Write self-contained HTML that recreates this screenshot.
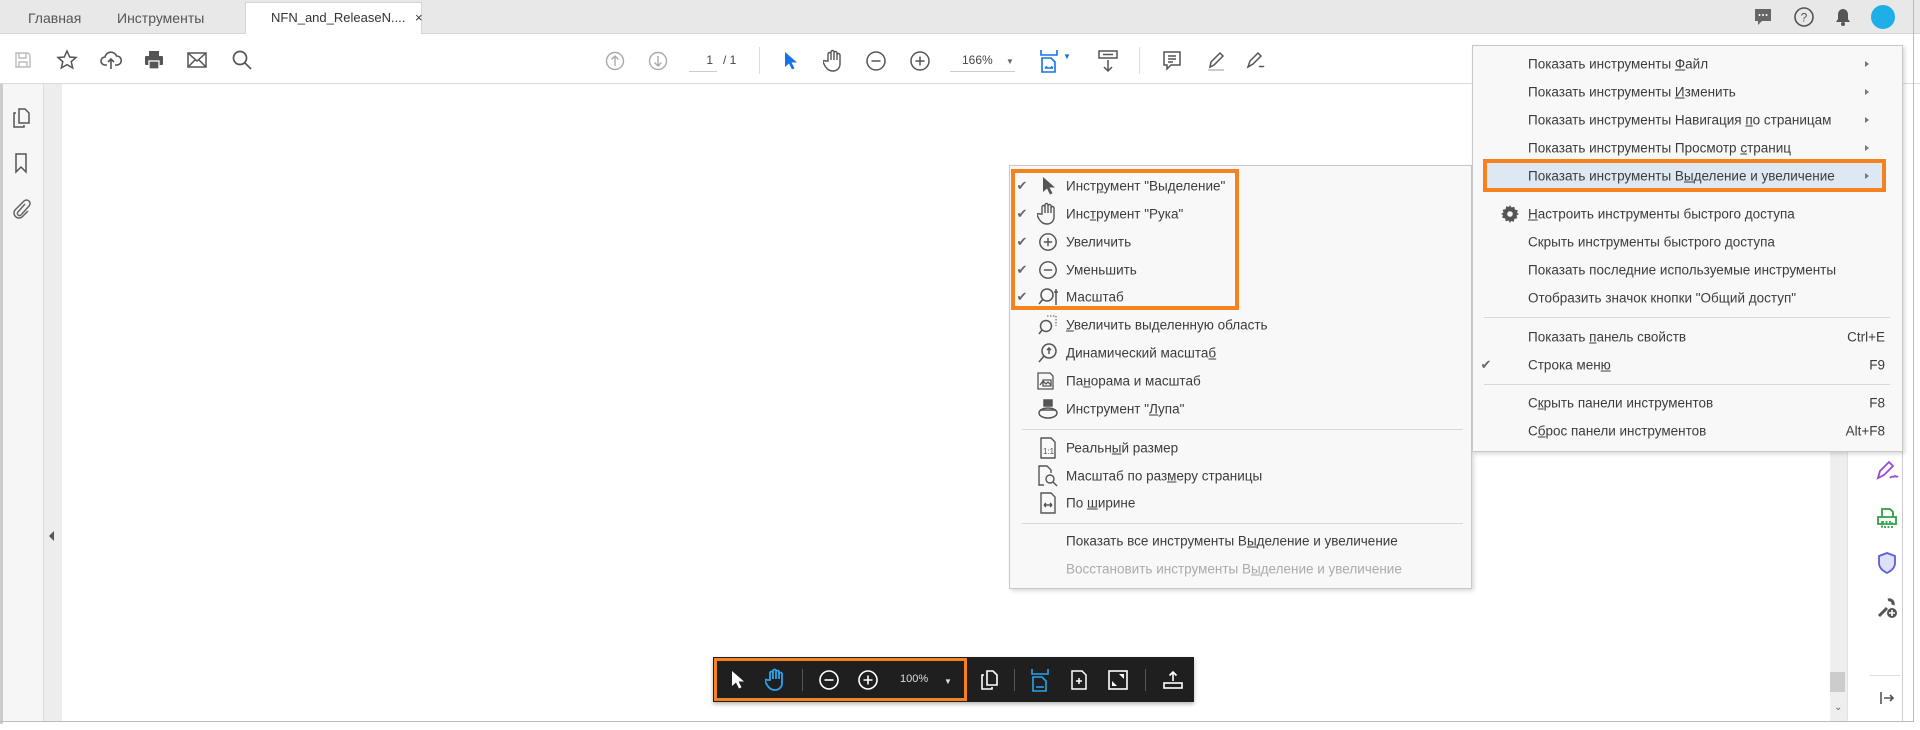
<!DOCTYPE html>
<html><head><meta charset="utf-8"><style>
*{box-sizing:border-box;margin:0;padding:0}
body{width:1920px;height:730px;background:#fff;font-family:"Liberation Sans","DejaVu Sans",sans-serif;color:#444;position:relative;overflow:hidden;font-size:13px}
.a{position:absolute}
.tabbar{left:0;top:0;width:1920px;height:34px;background:#e8e8e8;border-bottom:1px solid #d6d6d6}
.tab{top:10px;font-size:14px;color:#555}
.tb{left:0;top:34px;width:1920px;height:50px;background:#fff;border-bottom:1px solid #dcdcdc}
.ic{position:absolute;transform:translate(-50%,-50%)}
.menu{background:#f8f8f8;border:1px solid #c8c8c8;box-shadow:2px 2px 4px rgba(0,0,0,.15)}
.mi{position:absolute;font-size:13.5px;color:#3c3c3c;white-space:nowrap;transform:translateY(-50%)}
.sep{position:absolute;height:1px;background:#d8d8d8}
.chk{position:absolute;font-size:13px;color:#666;transform:translate(-50%,-50%)}
.arr{position:absolute;width:0;height:0;border-left:4px solid #777;border-top:3.5px solid transparent;border-bottom:3.5px solid transparent;transform:translateY(-50%)}
u{text-decoration:underline}
</style></head><body>
<div class="a tabbar"></div>
<div class="a tab" style="left:28px">Главная</div>
<div class="a tab" style="left:117px">Инструменты</div>
<div class="a" style="left:245px;top:2px;width:177px;height:33px;background:#fff;border:1px solid #d6d6d6;border-bottom:none"></div>
<div class="a tab" style="left:271px;font-size:13px;color:#333">NFN_and_ReleaseN.... <span style="margin-left:6px">×</span></div>
<!-- top right -->
<svg class="ic" style="left:1763px;top:17px" width="20" height="20" viewBox="0 0 20 20"><path d="M2 2h16v12H9l-4 4v-4H2z" fill="#666"/><circle cx="6.5" cy="8" r="1" fill="#fff"/><circle cx="10" cy="8" r="1" fill="#fff"/><circle cx="13.5" cy="8" r="1" fill="#fff"/></svg>
<svg class="ic" style="left:1804px;top:17px" width="22" height="22" viewBox="0 0 22 22"><circle cx="11" cy="11" r="9" fill="none" stroke="#555" stroke-width="1.6"/><text x="11" y="15.5" font-size="12" text-anchor="middle" fill="#555" font-family="Liberation Sans">?</text></svg>
<svg class="ic" style="left:1843px;top:17px" width="18" height="20" viewBox="0 0 18 20"><path d="M9 2c-3 0-5 2.5-5 5.5V12L2 15h14l-2-3V7.5C14 4.5 12 2 9 2z" fill="#555"/><circle cx="9" cy="17" r="2" fill="#555"/></svg>
<div class="a" style="left:1871px;top:5px;width:24px;height:24px;border-radius:50%;background:#1eaee8"></div>
<!-- toolbar -->
<div class="a tb"></div>
<svg class="ic" style="left:23px;top:60px" width="20" height="20" viewBox="0 0 20 20" fill="none" stroke="#bbb" stroke-width="1.4"><path d="M3 3h12l2 2v12H3z"/><path d="M6 3v5h7V3M6 17v-5h8v5"/></svg>
<svg class="ic" style="left:67px;top:60px" width="22" height="22" viewBox="0 0 22 22" fill="none" stroke="#555" stroke-width="1.5"><path d="M11 2l2.7 6 6.3.5-4.8 4.2 1.5 6.3L11 15.6 5.3 19l1.5-6.3L2 8.5 8.3 8z"/></svg>
<svg class="ic" style="left:111px;top:60px" width="22" height="22" viewBox="0 0 22 22" fill="none" stroke="#555" stroke-width="1.6"><path d="M7 16H5a4 4 0 010-8 6 6 0 0111.5-1A4.5 4.5 0 0117 16h-2M11 20v-9M8 13l3-3 3 3"/></svg>
<svg class="ic" style="left:154px;top:60px" width="22" height="22" viewBox="0 0 22 22"><rect x="6" y="2" width="10" height="5" fill="#555"/><rect x="2" y="7" width="18" height="9" rx="1" fill="#555"/><rect x="6" y="12" width="10" height="8" fill="#555" stroke="#fff" stroke-width="1.3"/></svg>
<svg class="ic" style="left:197px;top:60px" width="22" height="20" viewBox="0 0 22 20" fill="none" stroke="#555" stroke-width="1.5"><rect x="2" y="3" width="18" height="14"/><path d="M2 3l9 8 9-8M2 17l7-7M20 17l-7-7"/></svg>
<svg class="ic" style="left:242px;top:60px" width="22" height="22" viewBox="0 0 22 22" fill="none" stroke="#555" stroke-width="1.7"><circle cx="9" cy="9" r="6.5"/><path d="M14 14l6 6"/></svg>
<svg class="ic" style="left:615px;top:61px" width="20" height="20" viewBox="0 0 20 20" fill="none" stroke="#aaa" stroke-width="1.4"><circle cx="10" cy="10" r="8.5"/><path d="M10 15V5M6.5 8.5L10 5l3.5 3.5"/></svg>
<svg class="ic" style="left:658px;top:61px" width="20" height="20" viewBox="0 0 20 20" fill="none" stroke="#aaa" stroke-width="1.4"><circle cx="10" cy="10" r="8.5"/><path d="M10 5v10M6.5 11.5L10 15l3.5-3.5"/></svg>
<div class="a" style="left:689px;top:53px;width:28px;font-size:12px;text-align:right;color:#444;border-bottom:1px solid #ccc;padding-bottom:4px;padding-right:4px">1</div>
<div class="a" style="left:723px;top:53px;font-size:12px;color:#444">/ 1</div>
<div class="a" style="left:759px;top:47px;width:1px;height:27px;background:#ddd"></div>
<svg class="ic" style="left:790px;top:61px" width="14" height="20" viewBox="0 0 14 20"><path d="M2 1v15l4-3.5 3 6 2.5-1.2-3-5.8H14z" fill="#1473e6"/></svg>
<svg class="ic" style="left:834px;top:61px" width="22" height="24" viewBox="0 0 22 24" fill="none" stroke="#555" stroke-width="1.4"><path d="M5 12V5a1.5 1.5 0 013 0v6V3a1.5 1.5 0 013 0v8V4a1.5 1.5 0 013 0v7V6a1.5 1.5 0 013 0v9c0 4-3 7-7 7s-6-2-8-5l-2-4c-.5-1 1-2 2-1z"/></svg>
<svg class="ic" style="left:876px;top:61px" width="22" height="22" viewBox="0 0 22 22" fill="none" stroke="#555" stroke-width="1.5"><circle cx="11" cy="11" r="9"/><path d="M6.5 11h9"/></svg>
<svg class="ic" style="left:920px;top:61px" width="22" height="22" viewBox="0 0 22 22" fill="none" stroke="#555" stroke-width="1.5"><circle cx="11" cy="11" r="9"/><path d="M6.5 11h9M11 6.5v9"/></svg>
<div class="a" style="left:950px;top:53px;width:65px;font-size:12px;color:#444;border-bottom:1px solid #ccc;padding:0 0 4px 12px">166% <span style="font-size:8px;margin-left:10px;color:#666">▼</span></div>
<svg class="ic" style="left:1049px;top:61px" width="20" height="24" viewBox="0 0 20 24" fill="none" stroke="#1473e6" stroke-width="1.6"><path d="M2 1v5h16V1M3 9h9l4 4v10H3zM6 19h8M6 19l2-1.5M14 19l-2-1.5"/></svg>
<div class="a" style="left:1063px;top:52px;font-size:8px;color:#1473e6">▼</div>
<svg class="ic" style="left:1108px;top:61px" width="22" height="24" viewBox="0 0 22 24" fill="none" stroke="#555" stroke-width="1.5"><rect x="2" y="2" width="18" height="7"/><path d="M6 5.5h10M11 11v11M7 18l4 4 4-4"/></svg>
<div class="a" style="left:1139px;top:47px;width:1px;height:27px;background:#ddd"></div>
<svg class="ic" style="left:1172px;top:61px" width="20" height="22" viewBox="0 0 20 22" fill="none" stroke="#555" stroke-width="1.5"><path d="M2 2h16v13H9l-4 4v-4H2z"/><path d="M6 6h8M6 9h8M6 12h5"/></svg>
<svg class="ic" style="left:1216px;top:61px" width="22" height="22" viewBox="0 0 22 22" fill="none" stroke="#555" stroke-width="1.5"><path d="M5 17l1-5 9-9 3 3-9 9z"/><path d="M3 20h16" stroke="#ccc" stroke-width="2"/></svg>
<svg class="ic" style="left:1257px;top:61px" width="24" height="22" viewBox="0 0 24 22" fill="none" stroke="#555" stroke-width="1.5"><path d="M3 17l2-6 8-8 3 3-8 8zM14 17c2-2 3 1 5-1"/></svg>
<!-- left sidebar -->
<div class="a" style="left:0;top:84px;width:3px;height:640px;background:#ccc"></div>
<div class="a" style="left:3px;top:84px;width:41px;height:637px;background:#f6f6f6;border-right:1px solid #ddd"></div>
<div class="a" style="left:44px;top:84px;width:18px;height:637px;background:#ededed"></div>
<svg class="ic" style="left:21px;top:118px" width="20" height="22" viewBox="0 0 20 22" fill="none" stroke="#555" stroke-width="1.5"><path d="M8 2h6l4 4v10H8zM5 6H3v14h10v-2"/></svg>
<svg class="ic" style="left:21px;top:163px" width="16" height="22" viewBox="0 0 16 22" fill="none" stroke="#555" stroke-width="1.5"><path d="M3 2h10v18l-5-5-5 5z"/></svg>
<svg class="ic" style="left:21px;top:208px" width="20" height="22" viewBox="0 0 20 22" fill="none" stroke="#666" stroke-width="1.5"><path d="M14 7l-7 8a2 2 0 003 3l8-9a3.5 3.5 0 00-5-5L4 13a5 5 0 007 7l6-6"/></svg>
<div class="a" style="left:49px;top:531px;width:0;height:0;border-right:5px solid #555;border-top:5px solid transparent;border-bottom:5px solid transparent"></div>
<!-- right side -->
<div class="a" style="left:1830px;top:84px;width:17px;height:637px;background:#eee"></div>
<div class="a" style="left:1830px;top:672px;width:15px;height:20px;background:#ccc"></div>
<div class="a" style="left:1834px;top:702px;font-size:10px;color:#666">⌄</div>
<div class="a" style="left:1847px;top:84px;width:56px;height:637px;background:#fff;border-left:1px solid #e2e2e2;border-right:1px solid #ccc"></div>
<svg class="ic" style="left:1887px;top:470px" width="26" height="24" viewBox="0 0 26 24" fill="none" stroke="#9a48d8" stroke-width="1.8"><path d="M4 20l2-7 9-9 4 4-9 9zM16 20c2-3 3 0 5-2 1 1 2 1 3 0"/></svg>
<svg class="ic" style="left:1887px;top:518px" width="24" height="24" viewBox="0 0 24 24" fill="none" stroke="#2ea043" stroke-width="1.8"><path d="M7 3h8l3 3v5H7zM3 11h18v7H3z"/><path d="M7 16h10v5H7z" stroke-dasharray="2 1.5"/></svg>
<svg class="ic" style="left:1887px;top:563px" width="22" height="24" viewBox="0 0 22 24"><path d="M11 2l8 3v7c0 5-4 8-8 10-4-2-8-5-8-10V5z" fill="#dfe0fb" stroke="#5b5fd6" stroke-width="1.8"/></svg>
<svg class="ic" style="left:1887px;top:608px" width="24" height="24" viewBox="0 0 24 24"><path d="M4 20l8-8M13 4a4 4 0 015 5" stroke="#555" stroke-width="3" fill="none"/><circle cx="17" cy="17" r="5" fill="#555"/><path d="M17 14v6M14 17h6" stroke="#fff" stroke-width="1.6"/></svg>
<div class="a" style="left:1870px;top:675px;width:30px;height:1px;background:#ddd"></div>
<svg class="ic" style="left:1887px;top:698px" width="18" height="16" viewBox="0 0 18 16" fill="none" stroke="#555" stroke-width="1.6"><path d="M3 2v12M6 8h9M12 5l3 3-3 3"/></svg>
<div class="a" style="left:1913px;top:0;width:1px;height:722px;background:#bbb"></div>
<div class="a" style="left:0;top:721px;width:1914px;height:1px;background:#bbb"></div>
<!-- bottom floating toolbar -->
<div class="a" style="left:713px;top:657px;width:481px;height:45px;background:#1f1f1f;box-shadow:0 2px 4px rgba(0,0,0,.3)"></div>
<div class="a" style="left:714px;top:658px;width:253px;height:43px;border:3px solid #f5821f"></div>
<svg class="ic" style="left:737px;top:680px" width="14" height="20" viewBox="0 0 14 20"><path d="M2 1v15l4-3.5 3 6 2.5-1.2-3-5.8H14z" fill="#fff"/></svg>
<svg class="ic" style="left:776px;top:680px" width="22" height="24" viewBox="0 0 22 24" fill="none" stroke="#2aa3ee" stroke-width="1.8"><path d="M5 12V5a1.5 1.5 0 013 0v6V3a1.5 1.5 0 013 0v8V4a1.5 1.5 0 013 0v7V6a1.5 1.5 0 013 0v9c0 4-3 7-7 7s-6-2-8-5l-2-4c-.5-1 1-2 2-1z"/></svg>
<div class="a" style="left:802px;top:669px;width:1px;height:22px;background:#555"></div>
<svg class="ic" style="left:829px;top:680px" width="22" height="22" viewBox="0 0 22 22" fill="none" stroke="#fff" stroke-width="1.6"><circle cx="11" cy="11" r="9"/><path d="M6.5 11h9"/></svg>
<svg class="ic" style="left:868px;top:680px" width="22" height="22" viewBox="0 0 22 22" fill="none" stroke="#fff" stroke-width="1.6"><circle cx="11" cy="11" r="9"/><path d="M6.5 11h9M11 6.5v9"/></svg>
<div class="a" style="left:900px;top:673px;font-size:11px;color:#ddd">100%</div>
<div class="a" style="left:944px;top:677px;font-size:8px;color:#ddd">▼</div>
<svg class="ic" style="left:989px;top:680px" width="20" height="22" viewBox="0 0 20 22" fill="none" stroke="#fff" stroke-width="1.6"><path d="M8 2h6l4 4v10H8zM5 6H3v14h10v-2"/></svg>
<div class="a" style="left:1014px;top:669px;width:1px;height:22px;background:#555"></div>
<svg class="ic" style="left:1040px;top:680px" width="20" height="24" viewBox="0 0 20 24" fill="none" stroke="#2aa3ee" stroke-width="1.6"><path d="M2 1v5h16V1M3 9h9l4 4v10H3zM6 19h8"/></svg>
<svg class="ic" style="left:1079px;top:680px" width="20" height="22" viewBox="0 0 20 22" fill="none" stroke="#fff" stroke-width="1.5"><path d="M3 2h10l4 4v14H3z"/><path d="M10 9v6M7 12h6"/></svg>
<svg class="ic" style="left:1118px;top:680px" width="22" height="22" viewBox="0 0 22 22"><rect x="2" y="2" width="18" height="18" fill="none" stroke="#fff" stroke-width="1.6"/><path d="M12 5h5v5zM10 17H5v-5z" fill="#fff"/></svg>
<div class="a" style="left:1145px;top:669px;width:1px;height:22px;background:#555"></div>
<svg class="ic" style="left:1173px;top:680px" width="22" height="22" viewBox="0 0 22 22" fill="none" stroke="#fff" stroke-width="1.6"><path d="M11 12V3M7.5 6.5L11 3l3.5 3.5"/><rect x="2" y="14" width="18" height="5"/></svg>
<!-- left context menu -->
<div class="a menu" style="left:1009px;top:165px;width:463px;height:424px"></div>
<div class="a" style="left:1011px;top:169px;width:228px;height:141px;border:4px solid #f5821f"></div>
<span class="chk" style="left:1022px;top:186px">✔</span>
<span class="chk" style="left:1022px;top:214px">✔</span>
<span class="chk" style="left:1022px;top:242px">✔</span>
<span class="chk" style="left:1022px;top:270px">✔</span>
<span class="chk" style="left:1022px;top:297px">✔</span>
<svg class="ic" style="left:1048px;top:186px" width="14" height="20" viewBox="0 0 14 20"><path d="M2 1v15l4-3.5 3 6 2.5-1.2-3-5.8H14z" fill="#555"/></svg>
<svg class="ic" style="left:1048px;top:214px" width="22" height="24" viewBox="0 0 22 24" fill="none" stroke="#555" stroke-width="1.4"><path d="M5 12V5a1.5 1.5 0 013 0v6V3a1.5 1.5 0 013 0v8V4a1.5 1.5 0 013 0v7V6a1.5 1.5 0 013 0v9c0 4-3 7-7 7s-6-2-8-5l-2-4c-.5-1 1-2 2-1z"/></svg>
<svg class="ic" style="left:1048px;top:242px" width="20" height="20" viewBox="0 0 22 22" fill="none" stroke="#555" stroke-width="1.6"><circle cx="11" cy="11" r="9"/><path d="M6.5 11h9M11 6.5v9"/></svg>
<svg class="ic" style="left:1048px;top:270px" width="20" height="20" viewBox="0 0 22 22" fill="none" stroke="#555" stroke-width="1.6"><circle cx="11" cy="11" r="9"/><path d="M6.5 11h9"/></svg>
<svg class="ic" style="left:1048px;top:297px" width="22" height="20" viewBox="0 0 22 20" fill="none" stroke="#555" stroke-width="1.5"><circle cx="10" cy="8" r="6"/><path d="M6 12l-4 5M19 2v16M17 5h4"/></svg>
<svg class="ic" style="left:1048px;top:325px" width="22" height="22" viewBox="0 0 22 22" fill="none" stroke="#555" stroke-width="1.5"><circle cx="9" cy="12" r="5.5"/><path d="M5 16l-3 4"/><path d="M10 2h9v10" stroke-dasharray="1.5 1.5" stroke-width="1"/></svg>
<svg class="ic" style="left:1048px;top:353px" width="22" height="22" viewBox="0 0 22 22" fill="none" stroke="#555" stroke-width="1.5"><circle cx="12" cy="9" r="7"/><path d="M7 14l-5 6M12 6v6M10 8l2-2 2 2"/></svg>
<svg class="ic" style="left:1048px;top:381px" width="24" height="22" viewBox="0 0 24 22" fill="none" stroke="#555" stroke-width="1.3"><path d="M2 3h12l3 3v13H2z"/><path d="M4 15l3-4 3 3 2-2 3 3M7 10h8v6H7z"/></svg>
<svg class="ic" style="left:1048px;top:409px" width="22" height="22" viewBox="0 0 22 22" fill="none" stroke="#555" stroke-width="1.5"><path d="M7 2h8v6H7z" fill="#555"/><ellipse cx="11" cy="15" rx="9" ry="5"/><path d="M3 12h16"/></svg>
<div class="sep" style="left:1022px;top:429px;width:441px"></div>
<svg class="ic" style="left:1048px;top:448px" width="18" height="22" viewBox="0 0 18 22" fill="none" stroke="#555" stroke-width="1.4"><path d="M2 1h10l4 4v16H2z"/><text x="4" y="17" font-size="8" fill="#555" stroke="none" font-family="Liberation Sans">1:1</text></svg>
<svg class="ic" style="left:1048px;top:476px" width="22" height="22" viewBox="0 0 22 22" fill="none" stroke="#555" stroke-width="1.4"><path d="M7 20H2V1h8l4 4v3"/><circle cx="13" cy="14" r="4"/><path d="M16 17l4 4"/></svg>
<svg class="ic" style="left:1048px;top:503px" width="18" height="22" viewBox="0 0 18 22" fill="none" stroke="#555" stroke-width="1.4"><path d="M2 1h10l4 4v16H2zM5 13h8M5 13l2-2M5 13l2 2M13 13l-2-2M13 13l-2 2"/></svg>
<div class="sep" style="left:1022px;top:523px;width:441px"></div>
<div class="mi" style="left:1066px;top:186px">Инст<u>р</u>умент "Выделение"</div>
<div class="mi" style="left:1066px;top:214px">Инс<u>т</u>румент "Рука"</div>
<div class="mi" style="left:1066px;top:242px">Увеличить</div>
<div class="mi" style="left:1066px;top:270px">Уменьшить</div>
<div class="mi" style="left:1066px;top:297px">Масштаб</div>
<div class="mi" style="left:1066px;top:325px"><u>У</u>величить выделенную область</div>
<div class="mi" style="left:1066px;top:353px">Динамический масшта<u>б</u></div>
<div class="mi" style="left:1066px;top:381px">Па<u>н</u>орама и масштаб</div>
<div class="mi" style="left:1066px;top:409px">Инструмент "<u>Л</u>упа"</div>
<div class="mi" style="left:1066px;top:448px">Реальн<u>ы</u>й размер</div>
<div class="mi" style="left:1066px;top:476px">Масштаб по раз<u>м</u>еру страницы</div>
<div class="mi" style="left:1066px;top:503px">По <u>ш</u>ирине</div>
<div class="mi" style="left:1066px;top:541px">Показать все инструменты В<u>ы</u>деление и увеличение</div>
<div class="mi" style="left:1066px;top:569px;color:#aaa">Восстановить инструменты В<u>ы</u>деление и увеличение</div>
<!-- right context menu -->
<div class="a menu" style="left:1472px;top:45px;width:431px;height:407px"></div>
<div class="a" style="left:1483px;top:159px;width:403px;height:33px;background:#dde8f3;border:4px solid #f5821f"></div>
<div class="mi" style="left:1528px;top:64px">Показать инструменты <u>Ф</u>айл</div>
<div class="mi" style="left:1528px;top:92px">Показать инструменты <u>И</u>зменить</div>
<div class="mi" style="left:1528px;top:120px">Показать инструменты Навигация <u>п</u>о страницам</div>
<div class="mi" style="left:1528px;top:148px">Показать инструменты Просмотр <u>с</u>траниц</div>
<div class="mi" style="left:1528px;top:176px">Показать инструменты В<u>ы</u>деление и увеличение</div>
<div class="arr" style="left:1865px;top:64px"></div>
<div class="arr" style="left:1865px;top:92px"></div>
<div class="arr" style="left:1865px;top:120px"></div>
<div class="arr" style="left:1865px;top:148px"></div>
<div class="arr" style="left:1865px;top:176px"></div>
<svg class="ic" style="left:1510px;top:214px" width="20" height="20" viewBox="0 0 20 20"><path d="M10 1l1.5 2.5 2.8-.8.6 2.9 2.9.6-.8 2.8L19 10l-2.5 1.5.8 2.8-2.9.6-.6 2.9-2.8-.8L10 19l-1.5-2.5-2.8.8-.6-2.9-2.9-.6.8-2.8L1 10l2.5-1.5-.8-2.8 2.9-.6.6-2.9 2.8.8z" fill="#555"/><circle cx="10" cy="10" r="2.8" fill="#f8f8f8"/></svg>
<div class="mi" style="left:1528px;top:214px"><u>Н</u>астроить инструменты быстрого доступа</div>
<div class="mi" style="left:1528px;top:242px">Скрыть инструменты быстрого доступа</div>
<div class="mi" style="left:1528px;top:270px">Показать последние используемые инструменты</div>
<div class="mi" style="left:1528px;top:298px">Отобразить значок кнопки "Общий доступ"</div>
<div class="sep" style="left:1484px;top:317px;width:406px"></div>
<div class="mi" style="left:1528px;top:337px">Показать <u>п</u>анель свойств</div>
<div class="mi" style="left:1528px;top:365px">Строка мен<u>ю</u></div>
<span class="chk" style="left:1486px;top:365px">✔</span>
<div class="sep" style="left:1484px;top:384px;width:406px"></div>
<div class="mi" style="left:1528px;top:403px">С<u>к</u>рыть панели инструментов</div>
<div class="mi" style="left:1528px;top:431px">С<u>б</u>рос панели инструментов</div>
<div class="mi" style="right:35px;top:337px">Ctrl+E</div>
<div class="mi" style="right:35px;top:365px">F9</div>
<div class="mi" style="right:35px;top:403px">F8</div>
<div class="mi" style="right:35px;top:431px">Alt+F8</div>
</body></html>
